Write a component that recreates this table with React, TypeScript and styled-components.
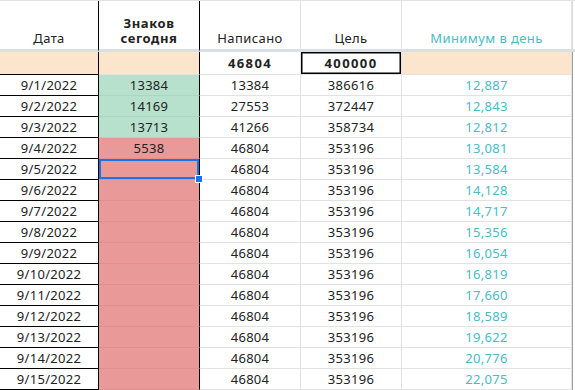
import styled, { createGlobalStyle, css } from 'styled-components';

const GlobalStyle = createGlobalStyle`
  body {
    margin: 0;
    background: #fff;
    font-family: 'Noto Sans', 'Open Sans', sans-serif;
  }
`;

const dates = Array.from({ length: 15 }, (_, i) => `9/${i + 1}/2022`);
const today = [13384, 14169, 13713, 5538];
const written = [13384, 27553, 41266];
const goal = [386616, 372447, 358734];
const minimum = [
  '12,887', '12,843', '12,812', '13,081', '13,584', '14,128', '14,717', '15,356',
  '16,054', '16,819', '17,660', '18,589', '19,622', '20,776', '22,075',
];

const App = () => {
  return (
    <>
      <GlobalStyle />
      <Sheet>
        <Row $height={51}>
          <HeadCell $dark>Дата</HeadCell>
          <HeadCell $dark $bold>Знаков сегодня</HeadCell>
          <HeadCell>Написано</HeadCell>
          <HeadCell>Цель</HeadCell>
          <HeadCell $teal>Минимум в день</HeadCell>
          <Edge $header />
        </Row>
        <Row $height={23}>
          <Cell $date $fill="#fce5cd" />
          <Cell $dark $fill="#fce5cd" />
          <Cell $bold>46804</Cell>
          <Cell $bold $boxed>400000</Cell>
          <Cell $fill="#fce5cd" />
          <Edge />
        </Row>
        {dates.map((d, i) => {
          const value = today[i];
          const fill = i < 3 ? '#b7e1cd' : '#ea9999';
          return (
            <Row key={d} $height={21}>
              <Cell $date>{d}</Cell>
              <Cell $dark $fill={fill} $soft $selected={i === 4}>
                {value ?? ''}
                {i === 4 && <Handle />}
              </Cell>
              <Cell>{written[i] ?? 46804}</Cell>
              <Cell>{goal[i] ?? 353196}</Cell>
              <Cell $teal>{minimum[i]}</Cell>
              <Edge />
            </Row>
          );
        })}
      </Sheet>
    </>
  );
};

const Sheet = styled.div`
  width: 575px;
  border-top: 1px solid #e2e2e2;
  box-sizing: border-box;
  overflow: hidden;
`;

const Row = styled.div<{ $height: number }>`
  display: grid;
  grid-template-columns: 99px 101px 101px 101px 170px 3px;
  height: ${(p) => p.$height}px;
`;

const HeadCell = styled.div<{ $dark?: boolean; $bold?: boolean; $teal?: boolean }>`
  box-sizing: border-box;
  display: flex;
  align-items: flex-end;
  justify-content: center;
  text-align: center;
  padding: 0 4px 3px;
  border-bottom: 3px solid #dadfe6;
  border-right: 1px solid ${(p) => (p.$dark ? '#000' : '#e2e2e2')};
  font-size: 13px;
  line-height: 15px;
  letter-spacing: ${(p) => (p.$bold ? '0.6px' : '0.4px')};
  font-weight: ${(p) => (p.$bold ? 700 : 400)};
  color: ${(p) => (p.$teal ? '#46bdc6' : '#222')};
`;

type CellProps = {
  $date?: boolean;
  $dark?: boolean;
  $fill?: string;
  $bold?: boolean;
  $boxed?: boolean;
  $teal?: boolean;
  $soft?: boolean;
  $selected?: boolean;
};

const Cell = styled.div<CellProps>`
  position: relative;
  box-sizing: border-box;
  display: flex;
  align-items: center;
  justify-content: center;
  font-size: 13px;
  letter-spacing: 0.3px;
  color: ${(p) => (p.$teal ? '#46bdc6' : '#222')};
  font-weight: ${(p) => (p.$bold ? 700 : 400)};
  background: ${(p) => p.$fill ?? '#fff'};
  border-right: 1px solid ${(p) => (p.$date || p.$dark ? '#000' : '#e2e2e2')};
  border-bottom: 1px solid
    ${(p) => (p.$date ? '#000' : p.$soft ? 'rgba(0, 0, 0, 0.05)' : '#e2e2e2')};
  ${(p) =>
    p.$bold &&
    css`
      letter-spacing: 1.4px;
    `}
  ${(p) =>
    p.$boxed &&
    css`
      box-shadow: inset 0 0 0 1.5px #000;
    `}
  ${(p) =>
    p.$selected &&
    css`
      box-shadow: inset 0 0 0 2px #1a73e8;
    `}
`;

const Handle = styled.span`
  position: absolute;
  right: -4px;
  bottom: -4px;
  width: 6px;
  height: 6px;
  background: #1a73e8;
  border: 1px solid #fff;
  z-index: 2;
`;

const Edge = styled.div<{ $header?: boolean }>`
  border-left: 1px solid ${(p) => (p.$header ? '#dcdcdc' : '#9e9e9e')};
  ${(p) =>
    p.$header &&
    css`
      border-bottom: 3px solid #dadfe6;
    `}
`;

export default App;
